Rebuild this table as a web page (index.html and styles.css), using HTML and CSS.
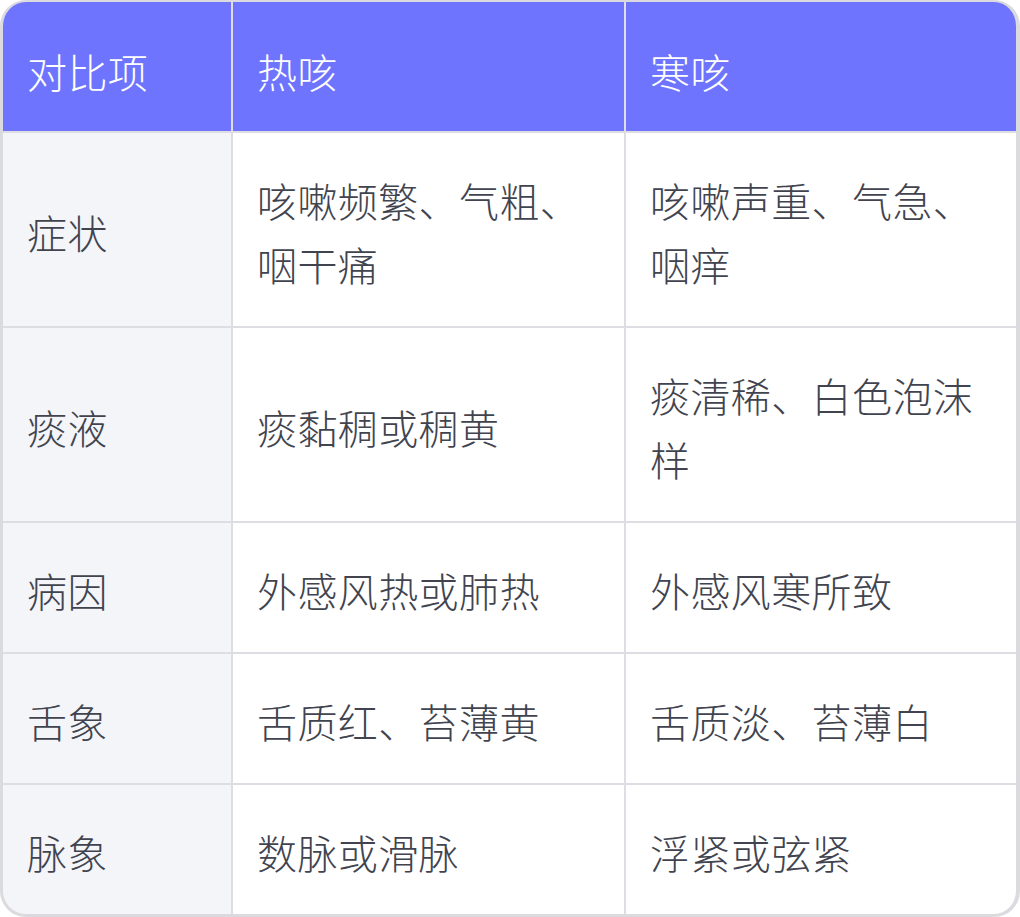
FILE: index.html
```html
<!DOCTYPE html>
<html lang="zh-CN">
<head>
<meta charset="utf-8">
<title>热咳与寒咳对比</title>
<link rel="stylesheet" href="styles.css">
</head>
<body>
<div class="table">
  <div class="cell head">对比项</div>
  <div class="cell head">热咳</div>
  <div class="cell head">寒咳</div>

  <div class="cell label">症状</div>
  <div class="cell">咳嗽频繁、气粗、咽干痛</div>
  <div class="cell">咳嗽声重、气急、咽痒</div>

  <div class="cell label">痰液</div>
  <div class="cell">痰黏稠或稠黄</div>
  <div class="cell">痰清稀、白色泡沫样</div>

  <div class="cell label">病因</div>
  <div class="cell">外感风热或肺热</div>
  <div class="cell">外感风寒所致</div>

  <div class="cell label">舌象</div>
  <div class="cell">舌质红、苔薄黄</div>
  <div class="cell">舌质淡、苔薄白</div>

  <div class="cell label">脉象</div>
  <div class="cell">数脉或滑脉</div>
  <div class="cell">浮紧或弦紧</div>
</div>
</body>
</html>
```

FILE: styles.css
```css
html, body {
  margin: 0;
  padding: 0;
  background: #ffffff;
}

.table {
  box-sizing: border-box;
  width: 1020px;
  height: 917px;
  display: grid;
  grid-template-columns: 228px 391px 390px;
  grid-auto-rows: auto;
  gap: 2px;
  background: #dddde3;
  border-style: solid;
  border-color: #dadadf;
  border-width: 2px 4px 3px 3px;
  border-radius: 26px;
  overflow: hidden;
  font-family: "Noto Sans CJK SC", "Noto Sans", sans-serif;
  font-size: 40px;
  font-weight: 300;
  letter-spacing: 0.4px;
  line-height: 64px;
  color: #41444f;
}

.cell {
  background: #ffffff;
  padding: 35px 24px 30px 24px;
  display: flex;
  align-items: center;
}

.cell.head {
  background: #6e74fe;
  color: #ffffff;
  padding: 37px 24px 28px 24px;
}

.cell.label {
  background: #f4f5f9;
}
```
